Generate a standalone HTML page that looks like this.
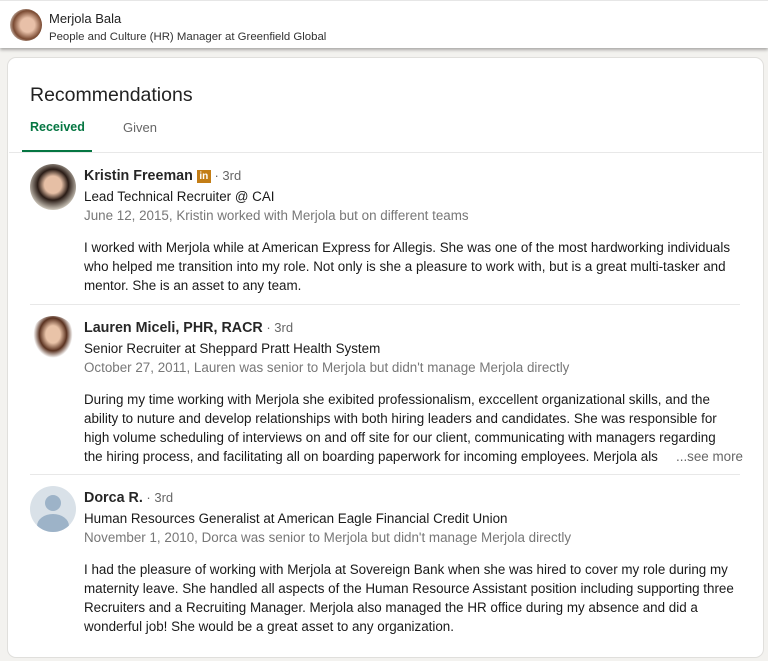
<!DOCTYPE html>
<html><head><meta charset="utf-8"><style>
*{margin:0;padding:0;box-sizing:border-box}
body{width:768px;height:661px;background:#f3f2ef;font-family:"Liberation Sans",sans-serif;position:relative;overflow:hidden;color:rgba(0,0,0,.9)}
.abs{position:absolute;white-space:nowrap}
.top{position:absolute;left:0;top:0;width:768px;height:48px;background:#fff;box-shadow:0 2px 3px rgba(0,0,0,.3);border-top:1px solid #e6e6e6}
.card{position:absolute;left:8px;top:58px;width:755px;height:599px;background:#fff;border-radius:8px;box-shadow:0 0 0 1px rgba(0,0,0,.08)}
.name{font-size:14.3px;font-weight:bold;color:rgba(0,0,0,.85)}
.deg{font-size:13px;font-weight:normal;color:#666}
.sub{font-size:13.4px;color:rgba(0,0,0,.9)}
.date{font-size:13.4px;color:#777}
.body{font-size:13.4px;color:rgba(0,0,0,.9);line-height:19px}
.av{position:absolute;border-radius:50%;overflow:hidden}
.hr{position:absolute;left:30px;width:710px;height:1px;background:#e8e8e8}
</style></head><body>
<div class="top">
<div class="av" style="left:10px;top:8px;width:32px;height:32px;background:radial-gradient(circle at 55% 50%,#e8c0a8 30%,#7a4a32 60%,#d9d0c8 80%)"></div>
<div class="abs" style="left:49px;top:10px;font-size:13px;color:#222">Merjola Bala</div>
<div class="abs" style="left:49px;top:30px;font-size:11.4px;color:#333">People and Culture (HR) Manager at Greenfield Global</div>
</div>
<div class="card"></div>
<div class="abs" style="left:30px;top:84px;font-size:19.5px;color:#222">Recommendations</div>
<div class="abs" style="left:30px;top:120px;font-size:12.5px;font-weight:bold;color:#057642">Received</div>
<div class="abs" style="left:123px;top:120px;font-size:13px;color:#666">Given</div>
<div style="position:absolute;left:22px;top:150px;width:70px;height:2px;background:#057642"></div>
<div style="position:absolute;left:9px;top:152px;width:753px;height:1px;background:#e8e8e8"></div>

<div class="av" style="left:30px;top:164px;width:46px;height:46px;background:radial-gradient(circle at 50% 45%,#e6bfa5 25%,#2a1c16 45%,#d8d2c6 75%)"></div>
<div class="abs name" style="left:84px;top:168px">Kristin Freeman <span style="display:inline-block;width:14px;height:13px;background:#c37d16;color:#fff;font-size:10px;text-align:center;line-height:13px;vertical-align:1px">in</span><span class="deg"> · 3rd</span></div>
<div class="abs sub" style="left:84px;top:189px">Lead Technical Recruiter @ CAI</div>
<div class="abs date" style="left:84px;top:208px">June 12, 2015, Kristin worked with Merjola but on different teams</div>
<div class="abs body" style="left:84px;top:238px">I worked with Merjola while at American Express for Allegis. She was one of the most hardworking individuals<br>who helped me transition into my role. Not only is she a pleasure to work with, but is a great multi-tasker and<br>mentor. She is an asset to any team.</div>
<div class="hr" style="top:304px"></div>

<div class="av" style="left:30px;top:316px;width:46px;height:46px;background:radial-gradient(ellipse at 50% 40%,#e9c3a8 22%,#5a3220 42%,#fff 60%)"></div>
<div class="abs name" style="left:84px;top:320px">Lauren Miceli, PHR, RACR<span class="deg"> · 3rd</span></div>
<div class="abs sub" style="left:84px;top:341px">Senior Recruiter at Sheppard Pratt Health System</div>
<div class="abs date" style="left:84px;top:360px">October 27, 2011, Lauren was senior to Merjola but didn't manage Merjola directly</div>
<div class="abs body" style="left:84px;top:390px">During my time working with Merjola she exibited professionalism, exccellent organizational skills, and the<br>ability to nuture and develop relationships with both hiring leaders and candidates. She was responsible for<br>high volume scheduling of interviews on and off site for our client, communicating with managers regarding<br>the hiring process, and facilitating all on boarding paperwork for incoming employees. Merjola als</div>
<div class="abs body" style="left:672px;top:447px;color:#666;background:#fff;padding-left:4px">...see more</div>
<div class="hr" style="top:474px"></div>

<div class="av" style="left:30px;top:486px;width:46px;height:46px;background:#d9e1e8">
<div style="position:absolute;left:15px;top:9px;width:16px;height:16px;border-radius:50%;background:#9db3c8"></div>
<div style="position:absolute;left:7px;top:28px;width:32px;height:24px;border-radius:50%;background:#9db3c8"></div></div>
<div class="abs name" style="left:84px;top:490px">Dorca R.<span class="deg"> · 3rd</span></div>
<div class="abs sub" style="left:84px;top:511px">Human Resources Generalist at American Eagle Financial Credit Union</div>
<div class="abs date" style="left:84px;top:530px">November 1, 2010, Dorca was senior to Merjola but didn't manage Merjola directly</div>
<div class="abs body" style="left:84px;top:560px">I had the pleasure of working with Merjola at Sovereign Bank when she was hired to cover my role during my<br>maternity leave. She handled all aspects of the Human Resource Assistant position including supporting three<br>Recruiters and a Recruiting Manager. Merjola also managed the HR office during my absence and did a<br>wonderful job! She would be a great asset to any organization.</div>
</body></html>
